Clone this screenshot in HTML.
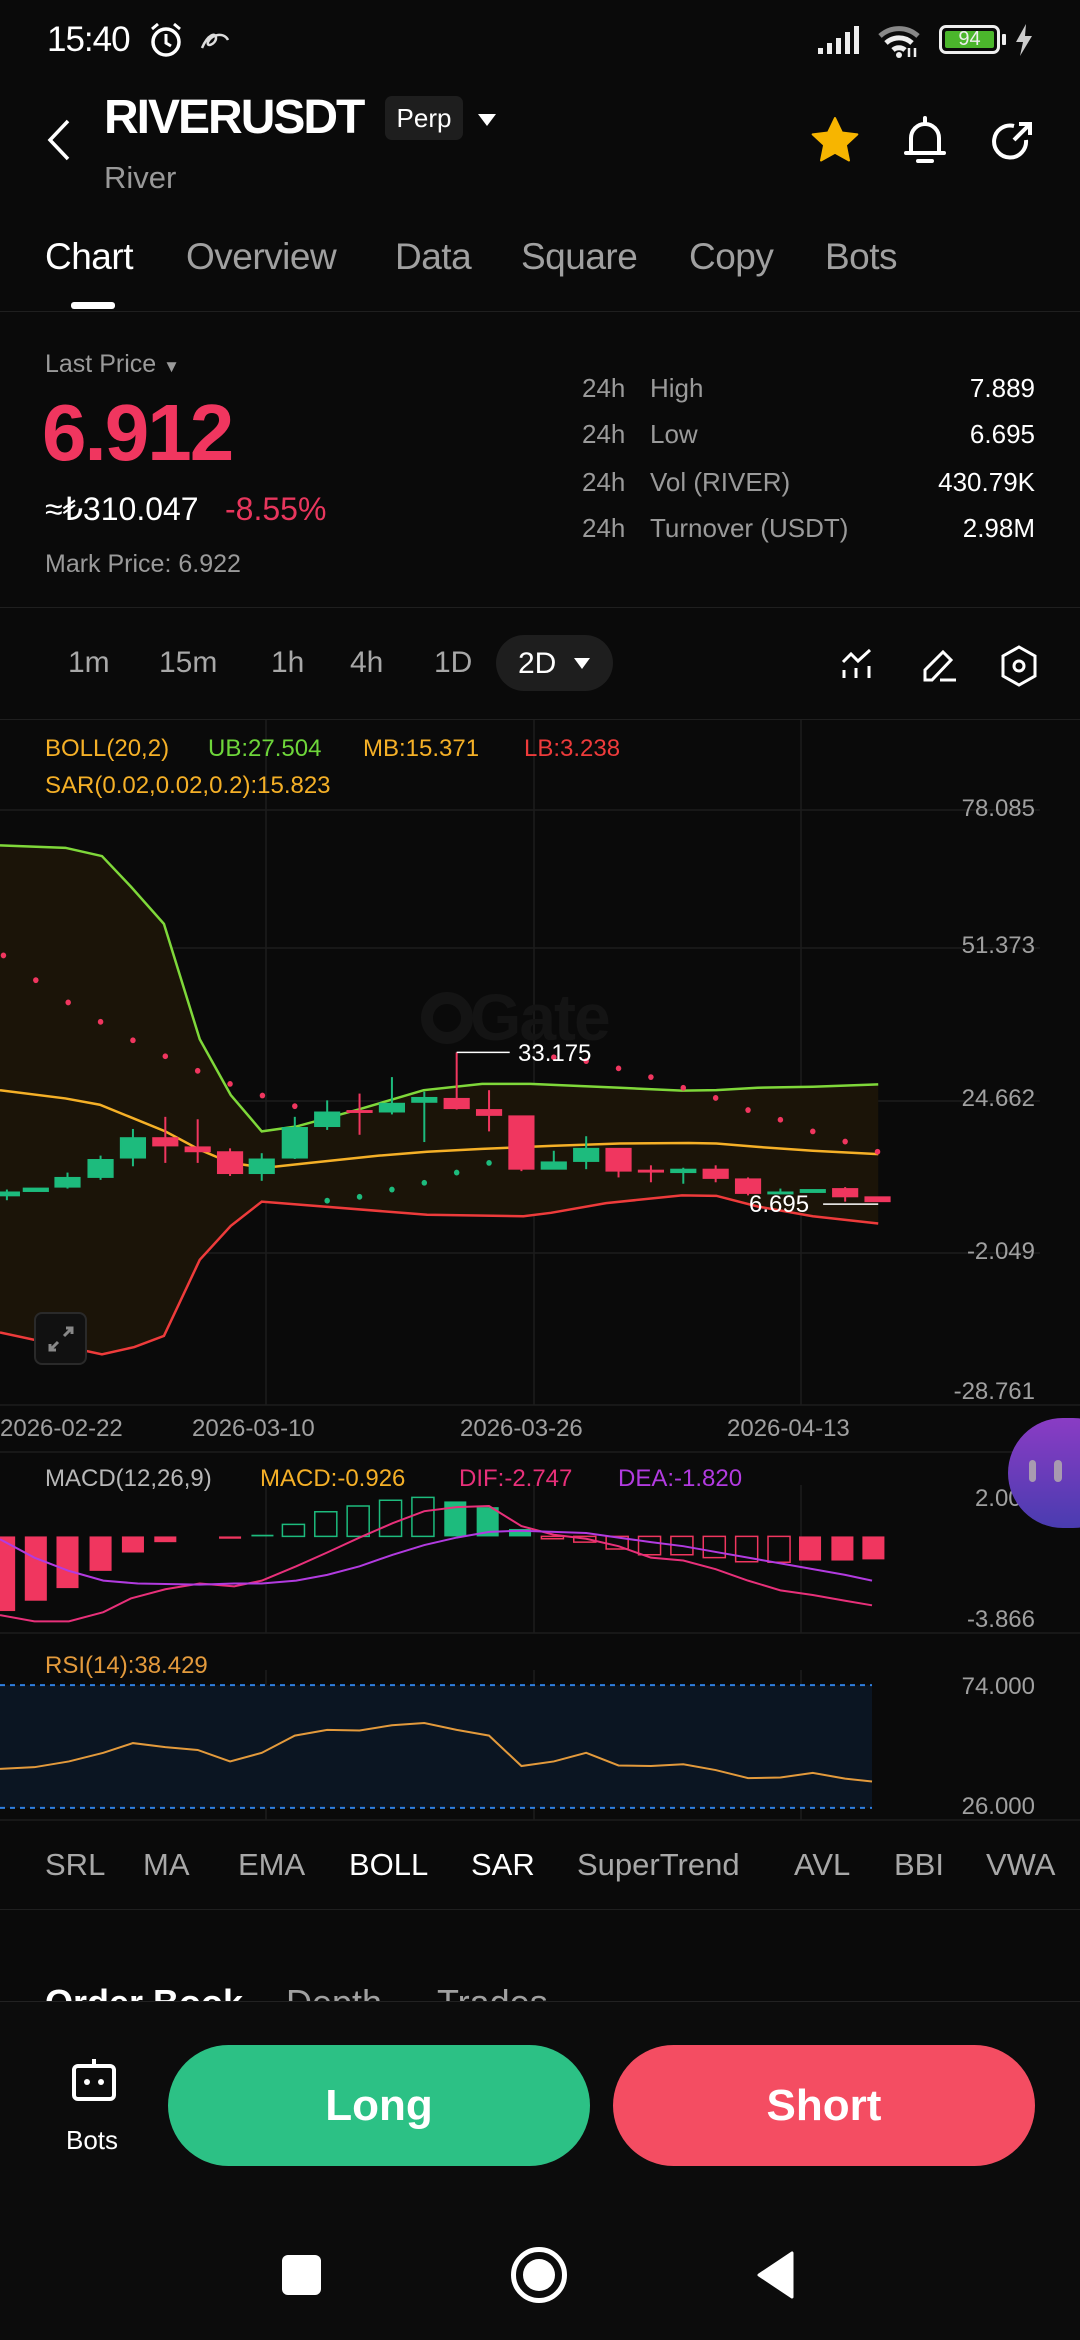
<!DOCTYPE html>
<html><head><meta charset="utf-8"><style>
*{margin:0;padding:0;box-sizing:border-box}
body{width:1080px;height:2340px;background:#0a0a0a;font-family:"Liberation Sans",sans-serif;color:#fff;position:relative;overflow:hidden}
.a{position:absolute;white-space:nowrap;line-height:1}
.g{color:#a0a0a0}
.hl{position:absolute;left:0;width:1080px;height:1px;background:#1f1f1f}
</style></head><body>

<!-- status bar -->
<div class="a" style="left:47px;top:22px;font-size:35px;letter-spacing:-1px">15:40</div>
<svg class="a" style="left:146px;top:20px" width="40" height="40" viewBox="0 0 40 40"><circle cx="20" cy="22" r="13" fill="none" stroke="#fff" stroke-width="3.5"/><path d="M20 14v9l5 3" stroke="#fff" stroke-width="3" fill="none"/><path d="M6 9l6-5M34 9l-6-5" stroke="#fff" stroke-width="3"/></svg>
<svg class="a" style="left:198px;top:28px" width="36" height="24" viewBox="0 0 36 24"><path d="M4 20c6-14 14-16 14-10s-10 10-8 4c4-8 16-10 20-2" fill="none" stroke="#ddd" stroke-width="2.5"/></svg>
<svg class="a" style="left:816px;top:24px" width="50" height="32" viewBox="0 0 50 32"><rect x="2" y="24" width="5" height="6" fill="#eee"/><rect x="11" y="19" width="5" height="11" fill="#eee"/><rect x="20" y="14" width="5" height="16" fill="#eee"/><rect x="29" y="8" width="5" height="22" fill="#eee"/><rect x="38" y="2" width="5" height="28" fill="#eee"/></svg>
<svg class="a" style="left:876px;top:24px" width="48" height="34" viewBox="0 0 48 34"><path d="M4 12a28 28 0 0 1 38 0" fill="none" stroke="#888" stroke-width="5"/><path d="M10 19a19 19 0 0 1 26 0" fill="none" stroke="#eee" stroke-width="5"/><path d="M17 26a9 9 0 0 1 12 0" fill="none" stroke="#eee" stroke-width="5"/><circle cx="23" cy="31" r="3" fill="#eee"/><path d="M33 24v9M39 24v9" stroke="#eee" stroke-width="2.5"/></svg>
<div class="a" style="left:939px;top:25px;width:61px;height:29px;border:3px solid #eee;border-radius:7px;padding:3px"><div style="background:#4bb62c;width:100%;height:100%;border-radius:2px;color:#eee;font-size:20px;text-align:center;line-height:17px">94</div></div>
<div class="a" style="left:1002px;top:34px;width:4px;height:11px;background:#eee;border-radius:1px"></div>
<svg class="a" style="left:1014px;top:24px" width="20" height="32" viewBox="0 0 20 32"><path d="M12 0L2 18h7l-3 14 12-20h-7z" fill="#ccc"/></svg>

<!-- header -->
<svg class="a" style="left:44px;top:118px" width="30" height="44" viewBox="0 0 30 44"><path d="M24 3L6 22l18 19" fill="none" stroke="#fff" stroke-width="3.5"/></svg>
<div class="a" style="left:104px;top:94px;font-size:48px;font-weight:bold;letter-spacing:-2px">RIVERUSDT</div>
<div class="a" style="left:385px;top:96px;width:78px;height:44px;background:#1e1e1e;border-radius:7px;font-size:26px;text-align:center;line-height:44px">Perp</div>
<svg class="a" style="left:477px;top:113px" width="20" height="14" viewBox="0 0 20 14"><path d="M1 1h18L10 13z" fill="#fff"/></svg>
<div class="a g" style="left:104px;top:162px;font-size:31px;color:#999">River</div>
<svg class="a" style="left:810px;top:116px" width="50" height="48" viewBox="0 0 24 23"><path d="M12 1l3.3 6.9 7.4.9-5.5 5.1 1.5 7.4L12 17.6l-6.7 3.7 1.5-7.4L1.3 8.8l7.4-.9z" fill="#f7b500" stroke="#f7b500" stroke-linejoin="round"/></svg>
<svg class="a" style="left:902px;top:114px" width="46" height="52" viewBox="0 0 46 52"><path d="M23 4v5M9 39V24a14 14 0 0 1 28 0v15M4 39h38M16 47h14" fill="none" stroke="#fff" stroke-width="4" stroke-linecap="round"/></svg>
<svg class="a" style="left:990px;top:120px" width="48" height="46" viewBox="0 0 48 46"><path d="M36 20a16 16 0 1 1-12-14" fill="none" stroke="#fff" stroke-width="4"/><path d="M24 20L40 4M29 4h11v11" fill="none" stroke="#fff" stroke-width="4"/></svg>

<!-- tabs -->
<div class="a" style="left:45px;top:238px;font-size:37px;letter-spacing:-0.5px">Chart</div>
<div class="a g" style="left:186px;top:238px;font-size:37px;letter-spacing:-0.5px">Overview</div>
<div class="a g" style="left:395px;top:238px;font-size:37px;letter-spacing:-0.5px">Data</div>
<div class="a g" style="left:521px;top:238px;font-size:37px;letter-spacing:-0.5px">Square</div>
<div class="a g" style="left:689px;top:238px;font-size:37px;letter-spacing:-0.5px">Copy</div>
<div class="a g" style="left:825px;top:238px;font-size:37px;letter-spacing:-0.5px">Bots</div>
<div class="a" style="left:71px;top:302px;width:44px;height:7px;background:#fff;border-radius:3px"></div>
<div class="hl" style="top:311px"></div>

<!-- price -->
<div class="a" style="left:45px;top:352px;font-size:25px;color:#9a9a9a">Last Price <span style="font-size:17px">▼</span></div>
<div class="a" style="left:42px;top:393px;font-size:80px;font-weight:bold;color:#f0365f;letter-spacing:-2px">6.912</div>
<div class="a" style="left:45px;top:493px;font-size:32px">≈₺310.047</div>
<div class="a" style="left:225px;top:493px;font-size:32px;color:#e8365d">-8.55%</div>
<div class="a" style="left:45px;top:552px;font-size:25px;color:#9a9a9a">Mark Price: 6.922</div>

<div class="a" style="left:582px;top:375px;font-size:26px;color:#9a9a9a">24h</div>
<div class="a" style="left:650px;top:375px;font-size:26px;color:#9a9a9a">High</div>
<div class="a" style="right:45px;top:375px;font-size:26px">7.889</div>
<div class="a" style="left:582px;top:421px;font-size:26px;color:#9a9a9a">24h</div>
<div class="a" style="left:650px;top:421px;font-size:26px;color:#9a9a9a">Low</div>
<div class="a" style="right:45px;top:421px;font-size:26px">6.695</div>
<div class="a" style="left:582px;top:469px;font-size:26px;color:#9a9a9a">24h</div>
<div class="a" style="left:650px;top:469px;font-size:26px;color:#9a9a9a">Vol (RIVER)</div>
<div class="a" style="right:45px;top:469px;font-size:26px">430.79K</div>
<div class="a" style="left:582px;top:515px;font-size:26px;color:#9a9a9a">24h</div>
<div class="a" style="left:650px;top:515px;font-size:26px;color:#9a9a9a">Turnover (USDT)</div>
<div class="a" style="right:45px;top:515px;font-size:26px">2.98M</div>
<div class="hl" style="top:607px"></div>

<!-- timeframes -->
<div class="a" style="left:68px;top:648px;font-size:30px;color:#a8a8a8">1m</div>
<div class="a" style="left:159px;top:648px;font-size:30px;color:#a8a8a8">15m</div>
<div class="a" style="left:271px;top:648px;font-size:30px;color:#a8a8a8">1h</div>
<div class="a" style="left:350px;top:648px;font-size:30px;color:#a8a8a8">4h</div>
<div class="a" style="left:434px;top:648px;font-size:30px;color:#a8a8a8">1D</div>
<div class="a" style="left:496px;top:635px;width:117px;height:56px;background:#1e1e1e;border-radius:28px"></div>
<div class="a" style="left:518px;top:649px;font-size:30px">2D</div>
<svg class="a" style="left:573px;top:657px" width="18" height="13" viewBox="0 0 18 13"><path d="M1 1h16L9 12z" fill="#fff"/></svg>
<svg class="a" style="left:840px;top:648px" width="36" height="34" viewBox="0 0 36 34"><path d="M3 14l8-8 7 7 12-11M4 22v8M16 20v10M29 18v12" fill="none" stroke="#fff" stroke-width="3"/></svg>
<svg class="a" style="left:920px;top:646px" width="38" height="38" viewBox="0 0 38 38"><path d="M5 34V24L23 6l8 8-19 20zM20 34h16" fill="none" stroke="#fff" stroke-width="3"/></svg>
<svg class="a" style="left:1000px;top:645px" width="38" height="42" viewBox="0 0 38 42"><path d="M19 2l16 9v20l-16 9-16-9V11z" fill="none" stroke="#fff" stroke-width="3"/><circle cx="19" cy="21" r="5" fill="none" stroke="#fff" stroke-width="3"/></svg>
<div class="hl" style="top:719px"></div>

<!-- main chart -->
<svg class="a" style="left:0;top:0" width="1080" height="2340" viewBox="0 0 1080 2340">
<g stroke="#1c1c1c" stroke-width="1.5">
<line x1="0" y1="810" x2="1040" y2="810"/><line x1="0" y1="948" x2="1040" y2="948"/><line x1="0" y1="1101" x2="1040" y2="1101"/><line x1="0" y1="1253" x2="1040" y2="1253"/><line x1="0" y1="1405" x2="1080" y2="1405"/>
<line x1="266" y1="720" x2="266" y2="1405"/><line x1="534" y1="720" x2="534" y2="1405"/><line x1="801" y1="720" x2="801" y2="1405"/>
<line x1="0" y1="1452" x2="1080" y2="1452"/>
<line x1="266" y1="1485" x2="266" y2="1633"/><line x1="534" y1="1485" x2="534" y2="1633"/><line x1="801" y1="1485" x2="801" y2="1633"/>
<line x1="0" y1="1633" x2="1080" y2="1633"/>
<line x1="266" y1="1670" x2="266" y2="1820"/><line x1="534" y1="1670" x2="534" y2="1820"/><line x1="801" y1="1670" x2="801" y2="1820"/>
<line x1="0" y1="1820" x2="1080" y2="1820"/>
</g>
<text x="470" y="1040" font-family="Liberation Sans" font-weight="bold" font-size="66" fill="#141414" letter-spacing="-2">Gate</text>
<circle cx="447" cy="1018" r="20" fill="none" stroke="#141414" stroke-width="12"/>
<g transform="translate(0,700) scale(0.6888,0.4847)">
<path d="M0,300 95,305 148,322 190,385 238,462 290,700 335,815 380,890 430,880 520,845 615,805 700,792 770,792 900,800 990,806 1040,805 1100,800 1180,798 1275,793 L1275,1080 1180,1065 1100,1045 1040,1023 990,1022 880,1038 800,1058 760,1065 620,1062 380,1035 335,1085 290,1155 238,1312 195,1335 148,1350 0,1305Z" fill="#1b1408"/>
<polyline vector-effect="non-scaling-stroke" fill="none" stroke="#7fd83a" stroke-width="2.5" points="0,300 95,305 148,322 190,385 238,462 290,700 335,815 380,890 430,880 520,845 615,805 700,792 770,792 900,800 990,806 1040,805 1100,800 1180,798 1275,793"/>
<polyline vector-effect="non-scaling-stroke" fill="none" stroke="#ee3b3b" stroke-width="2.5" points="0,1305 148,1350 195,1335 238,1312 290,1155 335,1085 380,1035 620,1062 760,1065 800,1058 880,1038 990,1022 1040,1023 1100,1045 1180,1065 1275,1080"/>
<polyline vector-effect="non-scaling-stroke" fill="none" stroke="#f5b027" stroke-width="2.5" points="0,805 95,822 145,835 240,890 290,928 335,955 385,965 450,955 550,940 620,932 700,926 800,920 900,915 1000,914 1040,915 1100,922 1180,930 1275,937"/>
<g stroke-width="2">
<g fill="#1dbb7d" stroke="#1dbb7d">
<line x1="10" y1="1010" x2="10" y2="1032" vector-effect="non-scaling-stroke"/><rect x="-8" y="1015" width="36" height="8"/>
<rect x="34" y="1007" width="36" height="7"/>
<line x1="98" y1="975" x2="98" y2="1008" vector-effect="non-scaling-stroke"/><rect x="80" y="985" width="36" height="20"/>
<line x1="146" y1="940" x2="146" y2="990" vector-effect="non-scaling-stroke"/><rect x="128" y="948" width="36" height="37"/>
<line x1="193" y1="885" x2="193" y2="962" vector-effect="non-scaling-stroke"/><rect x="175" y="903" width="36" height="42"/>
<line x1="380" y1="935" x2="380" y2="992" vector-effect="non-scaling-stroke"/><rect x="362" y="947" width="36" height="30"/>
<line x1="428" y1="860" x2="428" y2="947" vector-effect="non-scaling-stroke"/><rect x="410" y="882" width="36" height="63"/>
<line x1="475" y1="826" x2="475" y2="887" vector-effect="non-scaling-stroke"/><rect x="457" y="850" width="36" height="30"/>
<line x1="569" y1="778" x2="569" y2="855" vector-effect="non-scaling-stroke"/><rect x="551" y="832" width="36" height="18"/>
<line x1="616" y1="808" x2="616" y2="912" vector-effect="non-scaling-stroke"/><rect x="598" y="820" width="36" height="10"/>
<line x1="804" y1="930" x2="804" y2="968" vector-effect="non-scaling-stroke"/><rect x="786" y="953" width="36" height="15"/>
<line x1="851" y1="900" x2="851" y2="968" vector-effect="non-scaling-stroke"/><rect x="833" y="925" width="36" height="27"/>
<line x1="992" y1="965" x2="992" y2="998" vector-effect="non-scaling-stroke"/><rect x="974" y="968" width="36" height="7"/>
<line x1="1133" y1="1008" x2="1133" y2="1020" vector-effect="non-scaling-stroke"/><rect x="1115" y="1015" width="36" height="4"/>
<rect x="1162" y="1010" width="36" height="6"/>
</g>
<g fill="#f0365f" stroke="#f0365f">
<line x1="240" y1="860" x2="240" y2="955" vector-effect="non-scaling-stroke"/><rect x="222" y="903" width="36" height="17"/>
<line x1="287" y1="865" x2="287" y2="955" vector-effect="non-scaling-stroke"/><rect x="269" y="922" width="36" height="10"/>
<line x1="334" y1="925" x2="334" y2="982" vector-effect="non-scaling-stroke"/><rect x="316" y="932" width="36" height="45"/>
<line x1="522" y1="812" x2="522" y2="897" vector-effect="non-scaling-stroke"/><rect x="504" y="847" width="36" height="4"/>
<line x1="663" y1="727" x2="663" y2="845" vector-effect="non-scaling-stroke"/><rect x="645" y="822" width="36" height="21"/>
<line x1="710" y1="805" x2="710" y2="890" vector-effect="non-scaling-stroke"/><rect x="692" y="845" width="36" height="12"/>
<line x1="757" y1="858" x2="757" y2="972" vector-effect="non-scaling-stroke"/><rect x="739" y="858" width="36" height="110"/>
<line x1="898" y1="925" x2="898" y2="985" vector-effect="non-scaling-stroke"/><rect x="880" y="925" width="36" height="47"/>
<line x1="945" y1="960" x2="945" y2="995" vector-effect="non-scaling-stroke"/><rect x="927" y="970" width="36" height="4"/>
<line x1="1039" y1="960" x2="1039" y2="995" vector-effect="non-scaling-stroke"/><rect x="1021" y="968" width="36" height="19"/>
<line x1="1086" y1="985" x2="1086" y2="1022" vector-effect="non-scaling-stroke"/><rect x="1068" y="988" width="36" height="30"/>
<line x1="1227" y1="1005" x2="1227" y2="1035" vector-effect="non-scaling-stroke"/><rect x="1209" y="1008" width="36" height="17"/>
<rect x="1256" y="1025" width="36" height="10"/>
</g>
</g>
<g fill="#f0365f">
<ellipse cx="5" cy="527" rx="4" ry="6"/><ellipse cx="52" cy="578" rx="4" ry="6"/><ellipse cx="99" cy="624" rx="4" ry="6"/><ellipse cx="146" cy="664" rx="4" ry="6"/><ellipse cx="193" cy="702" rx="4" ry="6"/><ellipse cx="240" cy="735" rx="4" ry="6"/><ellipse cx="287" cy="765" rx="4" ry="6"/><ellipse cx="334" cy="792" rx="4" ry="6"/><ellipse cx="381" cy="816" rx="4" ry="6"/><ellipse cx="428" cy="838" rx="4" ry="6"/>
<ellipse cx="804" cy="737" rx="4" ry="6"/><ellipse cx="851" cy="745" rx="4" ry="6"/><ellipse cx="898" cy="760" rx="4" ry="6"/><ellipse cx="945" cy="778" rx="4" ry="6"/><ellipse cx="992" cy="800" rx="4" ry="6"/><ellipse cx="1039" cy="821" rx="4" ry="6"/><ellipse cx="1086" cy="846" rx="4" ry="6"/><ellipse cx="1133" cy="866" rx="4" ry="6"/><ellipse cx="1180" cy="890" rx="4" ry="6"/><ellipse cx="1227" cy="911" rx="4" ry="6"/><ellipse cx="1274" cy="932" rx="4" ry="6"/>
</g>
<g fill="#1dbb7d"><ellipse cx="475" cy="1033" rx="4" ry="6"/><ellipse cx="522" cy="1025" rx="4" ry="6"/><ellipse cx="569" cy="1010" rx="4" ry="6"/><ellipse cx="616" cy="996" rx="4" ry="6"/><ellipse cx="663" cy="975" rx="4" ry="6"/><ellipse cx="710" cy="955" rx="4" ry="6"/></g>
<polyline vector-effect="non-scaling-stroke" points="663,727 740,727" stroke="#fff" stroke-width="1.5" fill="none"/>
<polyline vector-effect="non-scaling-stroke" points="1195,1040 1275,1040" stroke="#fff" stroke-width="1.5" fill="none"/>
</g>
<text x="518" y="1061" font-family="Liberation Sans" font-size="24" fill="#fff">33.175</text>
<text x="749" y="1212" font-family="Liberation Sans" font-size="24" fill="#fff">6.695</text>

<!-- MACD -->
<g transform="translate(0,1440) scale(0.6888,0.574)">
<g fill="#f0365f">
<rect x="-10" y="168" width="32" height="130"/><rect x="36" y="168" width="32" height="112"/><rect x="82" y="168" width="32" height="90"/><rect x="130" y="168" width="32" height="60"/><rect x="177" y="168" width="32" height="28"/><rect x="224" y="168" width="32" height="10"/><rect x="318" y="168" width="32" height="4"/>
<rect x="1160" y="168" width="32" height="42"/><rect x="1207" y="168" width="32" height="42"/><rect x="1252" y="168" width="32" height="40"/>
</g>
<g fill="none" stroke="#1dbb7d" stroke-width="1.5">
<rect x="410" y="147" width="32" height="21" vector-effect="non-scaling-stroke"/><rect x="457" y="125" width="32" height="43" vector-effect="non-scaling-stroke"/><rect x="504" y="115" width="32" height="53" vector-effect="non-scaling-stroke"/><rect x="551" y="105" width="32" height="63" vector-effect="non-scaling-stroke"/><rect x="598" y="100" width="32" height="68" vector-effect="non-scaling-stroke"/>
</g>
<g fill="#1dbb7d"><rect x="645" y="107" width="32" height="61"/><rect x="692" y="117" width="32" height="51"/><rect x="739" y="155" width="32" height="13"/><rect x="365" y="165" width="32" height="3"/></g>
<g fill="none" stroke="#f0365f" stroke-width="1.5">
<rect x="786" y="168" width="32" height="4" vector-effect="non-scaling-stroke"/><rect x="833" y="168" width="32" height="10" vector-effect="non-scaling-stroke"/><rect x="880" y="168" width="32" height="22" vector-effect="non-scaling-stroke"/><rect x="927" y="168" width="32" height="32" vector-effect="non-scaling-stroke"/><rect x="974" y="168" width="32" height="32" vector-effect="non-scaling-stroke"/><rect x="1021" y="168" width="32" height="37" vector-effect="non-scaling-stroke"/><rect x="1068" y="168" width="32" height="44" vector-effect="non-scaling-stroke"/><rect x="1115" y="168" width="32" height="45" vector-effect="non-scaling-stroke"/>
</g>
<polyline vector-effect="non-scaling-stroke" fill="none" stroke="#e8307a" stroke-width="2" points="0,305 50,316 100,316 150,300 190,276 240,260 290,250 340,255 380,245 430,220 475,196 522,170 570,145 616,124 663,117 710,115 757,150 804,165 851,172 898,185 945,205 992,210 1039,225 1086,245 1133,262 1180,270 1227,280 1266,288"/>
<polyline vector-effect="non-scaling-stroke" fill="none" stroke="#b23be0" stroke-width="2" points="0,173 50,205 100,228 150,245 200,250 290,252 340,250 380,250 430,245 475,235 522,220 570,200 616,183 663,170 710,160 757,158 804,160 851,162 898,170 945,178 992,185 1039,195 1086,205 1133,215 1180,225 1227,235 1266,245"/>
<rect x="0" y="427" width="1266" height="214" fill="#0b1522"/>
<polyline vector-effect="non-scaling-stroke" fill="none" stroke="#e39a3c" stroke-width="2" points="0,573 50,570 100,560 150,545 193,528 240,535 287,540 334,560 380,545 428,515 475,505 522,506 569,497 616,493 663,505 710,515 757,568 804,560 851,545 898,567 945,568 992,565 1039,575 1086,589 1133,588 1180,580 1227,590 1266,595"/>
<line vector-effect="non-scaling-stroke" x1="0" y1="427" x2="1266" y2="427" stroke="#2f7fe0" stroke-width="2" stroke-dasharray="5 5"/>
<line vector-effect="non-scaling-stroke" x1="0" y1="641" x2="1266" y2="641" stroke="#2f7fe0" stroke-width="2" stroke-dasharray="5 5"/>
</g>
</svg>

<div class="a" style="left:45px;top:737px;font-size:24px;color:#f5b027">BOLL(20,2)</div>
<div class="a" style="left:208px;top:737px;font-size:24px;color:#6ed63a">UB:27.504</div>
<div class="a" style="left:363px;top:737px;font-size:24px;color:#f5b027">MB:15.371</div>
<div class="a" style="left:524px;top:737px;font-size:24px;color:#ee3b3b">LB:3.238</div>
<div class="a" style="left:45px;top:774px;font-size:24px;color:#f5b027">SAR(0.02,0.02,0.2):15.823</div>
<div class="a" style="right:45px;top:797px;font-size:24px;color:#a0a0a0">78.085</div>
<div class="a" style="right:45px;top:934px;font-size:24px;color:#a0a0a0">51.373</div>
<div class="a" style="right:45px;top:1087px;font-size:24px;color:#a0a0a0">24.662</div>
<div class="a" style="right:45px;top:1240px;font-size:24px;color:#a0a0a0">-2.049</div>
<div class="a" style="right:45px;top:1380px;font-size:24px;color:#a0a0a0">-28.761</div>
<div class="a" style="left:34px;top:1312px;width:53px;height:53px;border:2px solid #2a2a2a;border-radius:8px;background:#111"></div>
<svg class="a" style="left:44px;top:1322px" width="34" height="34" viewBox="0 0 34 34"><path d="M20 14l8-8M22 6h6v6M14 20l-8 8M6 22v6h6" fill="none" stroke="#888" stroke-width="3"/></svg>
<div class="a" style="left:0;top:1417px;font-size:24px;color:#a0a0a0">2026-02-22</div>
<div class="a" style="left:192px;top:1417px;font-size:24px;color:#a0a0a0">2026-03-10</div>
<div class="a" style="left:460px;top:1417px;font-size:24px;color:#a0a0a0">2026-03-26</div>
<div class="a" style="left:727px;top:1417px;font-size:24px;color:#a0a0a0">2026-04-13</div>

<div class="a" style="left:45px;top:1467px;font-size:24px;color:#b8b8b8">MACD(12,26,9)</div>
<div class="a" style="left:260px;top:1467px;font-size:24px;color:#f5b027">MACD:-0.926</div>
<div class="a" style="left:459px;top:1467px;font-size:24px;color:#e8307a">DIF:-2.747</div>
<div class="a" style="left:618px;top:1467px;font-size:24px;color:#b23be0">DEA:-1.820</div>
<div class="a" style="right:45px;top:1487px;font-size:24px;color:#a0a0a0">2.000</div>
<div class="a" style="right:45px;top:1608px;font-size:24px;color:#a0a0a0">-3.866</div>
<div class="a" style="left:45px;top:1654px;font-size:24px;color:#e39a3c">RSI(14):38.429</div>
<div class="a" style="right:45px;top:1675px;font-size:24px;color:#a0a0a0">74.000</div>
<div class="a" style="right:45px;top:1795px;font-size:24px;color:#a0a0a0">26.000</div>

<div class="a" style="left:1008px;top:1418px;width:120px;height:110px;border-radius:55px;background:linear-gradient(#8a3cc4,#4a3cb0)"></div>
<div class="a" style="left:1029px;top:1460px;width:7px;height:22px;border-radius:4px;background:#a89ab0"></div>
<div class="a" style="left:1054px;top:1460px;width:8px;height:22px;border-radius:4px;background:#a89ab0"></div>

<!-- indicator row -->
<div class="a" style="left:45px;top:1849px;font-size:31px;color:#a8a8a8">SRL</div>
<div class="a" style="left:143px;top:1849px;font-size:31px;color:#a8a8a8">MA</div>
<div class="a" style="left:238px;top:1849px;font-size:31px;color:#a8a8a8">EMA</div>
<div class="a" style="left:349px;top:1849px;font-size:31px">BOLL</div>
<div class="a" style="left:471px;top:1849px;font-size:31px">SAR</div>
<div class="a" style="left:577px;top:1849px;font-size:31px;color:#a8a8a8">SuperTrend</div>
<div class="a" style="left:794px;top:1849px;font-size:31px;color:#a8a8a8">AVL</div>
<div class="a" style="left:894px;top:1849px;font-size:31px;color:#a8a8a8">BBI</div>
<div class="a" style="left:986px;top:1849px;font-size:31px;color:#a8a8a8">VWA</div>
<div class="hl" style="top:1909px"></div>

<div class="a" style="left:45px;top:1985px;font-size:36px;font-weight:bold">Order Book</div>
<div class="a" style="left:286px;top:1985px;font-size:36px;color:#a0a0a0">Depth</div>
<div class="a" style="left:437px;top:1985px;font-size:36px;color:#a0a0a0">Trades</div>

<!-- bottom panel -->
<div class="a" style="left:0;top:2001px;width:1080px;height:339px;background:#0c0c0c;border-top:1px solid #222"></div>
<svg class="a" style="left:70px;top:2057px" width="48" height="46" viewBox="0 0 48 46"><path d="M24 2v6" stroke="#fff" stroke-width="4"/><rect x="4" y="9" width="40" height="33" rx="4" fill="none" stroke="#fff" stroke-width="4"/><circle cx="17" cy="25" r="3" fill="#fff"/><circle cx="31" cy="25" r="3" fill="#fff"/></svg>
<div class="a" style="left:66px;top:2127px;font-size:26px">Bots</div>
<div class="a" style="left:168px;top:2045px;width:422px;height:121px;border-radius:61px;background:#2cc185;font-size:44px;font-weight:bold;text-align:center;line-height:121px">Long</div>
<div class="a" style="left:613px;top:2045px;width:422px;height:121px;border-radius:61px;background:#f44d62;font-size:44px;font-weight:bold;text-align:center;line-height:121px">Short</div>

<div class="a" style="left:282px;top:2255px;width:39px;height:40px;background:#fff;border-radius:6px"></div>
<div class="a" style="left:511px;top:2247px;width:56px;height:56px;border:5px solid #fff;border-radius:50%"></div>
<div class="a" style="left:523px;top:2259px;width:32px;height:32px;background:#fff;border-radius:50%"></div>
<svg class="a" style="left:756px;top:2250px" width="40" height="50" viewBox="0 0 40 50"><path d="M36 3v44L3 25z" fill="#fff" stroke="#fff" stroke-linejoin="round" stroke-width="3"/></svg>
</body></html>
